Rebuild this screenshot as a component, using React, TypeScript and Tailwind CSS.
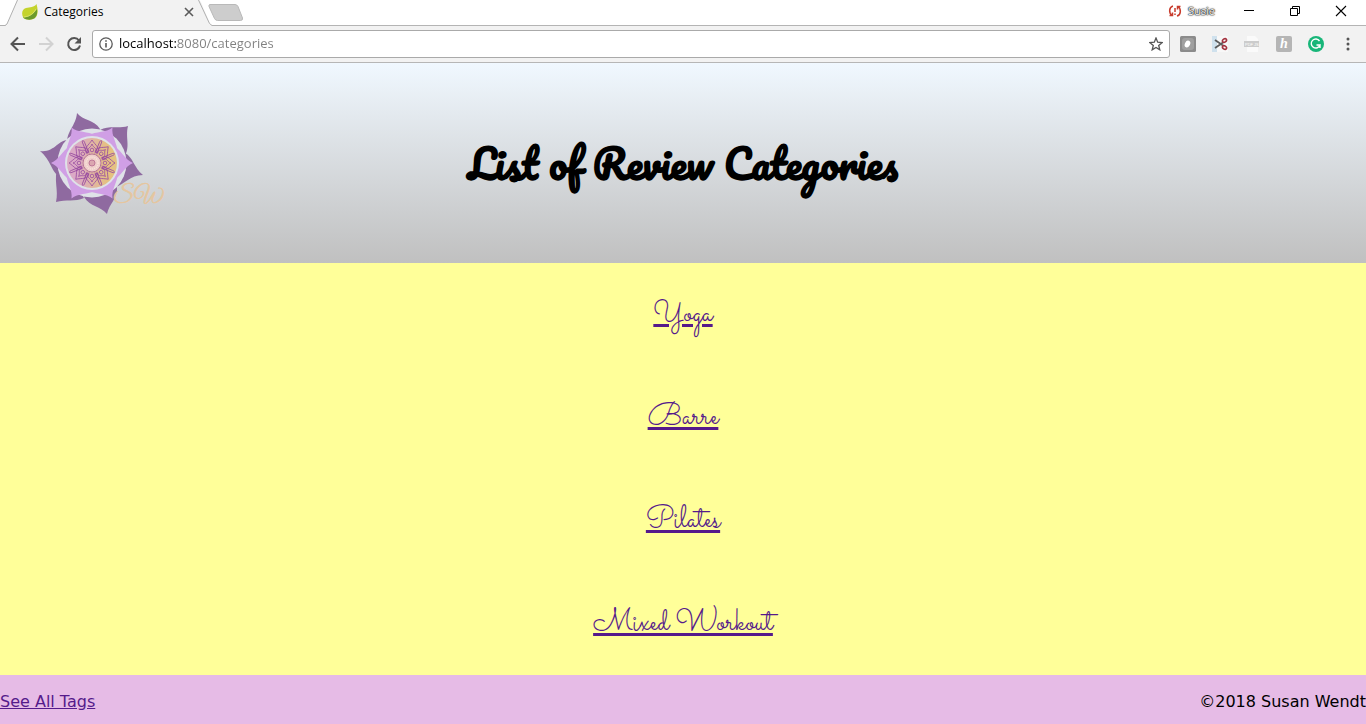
import React from "react";

const categories = ["Yoga", "Barre", "Pilates", "Mixed Workout"];

function TabStrip() {
  return (
    <header className="relative flex h-[26px] border-b border-[#b4b4b4] bg-white">
      <svg className="absolute left-0 top-0 h-[26px] w-[250px]" viewBox="0 0 250 26" aria-hidden="true">
        <path d="M5 26 7 24 17 1 19 0H199L201 2 210 24 213 26Z" fill="#f2f2f2" />
        <path d="M0 25.5H5L7 24 17.5 0M198.500 0 209.500 23.500 212 25.500H250" fill="none" stroke="#b0b0b0" />
        <path d="M210 4.500H235Q237 4.500 238 6.500L242.500 18Q243 20.500 240.500 20.500H217.500Q215.500 20.500 214.500 18.500L209 6.500Q208.500 4.500 210 4.500Z" fill="#cdcdcd" stroke="#b9b9b9" />
      </svg>
      <div className="relative flex h-6 w-[200px] items-center pl-[22px]">
        <svg className="h-4 w-4" viewBox="0 0 16 16" aria-hidden="true">
          <path d="M14.500 0C16 5 16.500 11 13 14 9.500 16.500 4 16 1.500 14 -1 10 0 5 4 4 8 3 12 3.500 14.500 0Z" fill="#c4d32c" />
          <path d="M1 13.500C7 13 11 11 15 5 15.500 9 15 12 12.500 14.300 9 16.500 4 16 1 13.500Z" fill="#6b9a2c" />
          <path d="M2 13C8 12.500 11.500 9.500 14 5" fill="none" stroke="#e2e982" strokeWidth=".7" />
        </svg>
        <h2 className="ml-[6px] text-xs">Categories</h2>
        <button className="ml-auto mr-[5px] h-3 w-3" aria-label="Close tab">
          <svg viewBox="0 0 12 12" aria-hidden="true"><path d="m2 2 8 8m0-8-8 8" stroke="#5a5a5a" strokeWidth="1.6" /></svg>
        </button>
      </div>
      <div className="ml-auto flex h-[22px] items-center">
        <svg className="mr-[6px] h-3 w-[14px]" viewBox="0 0 14 12" fill="none" stroke="#c83c2d" strokeWidth="1.500" aria-hidden="true">
          <path d="M5 1C1 2 .5 8 4 10.500M1.500 10.500H4.500V7.500M9 11C13 10 13.500 4 10 1.500M12.500 1.500H9.500V4.500M7 3V7M7 8.500V10" />
        </svg>
        <span className="mr-[28px] text-[11px] text-white [text-shadow:0_0_2px_#000,0_0_1px_#000,0_0_1px_#000]">Susie</span>
        <button className="mr-[34px] h-3 w-3" aria-label="Minimize"><svg viewBox="0 0 12 12"><path d="M1 5.500H11" stroke="#000" /></svg></button>
        <button className="mr-[34px] h-3 w-3" aria-label="Restore"><svg viewBox="0 0 12 12" fill="none" stroke="#000"><path d="M1.500 3.500H8.500V10.500H1.500ZM3.500 3.500V1.500H10.500V8.500H8.500" /></svg></button>
        <button className="mr-[19px] h-3 w-3" aria-label="Close"><svg viewBox="0 0 12 12"><path d="m1 1 10 10m0-10L1 11" stroke="#000" strokeWidth="1.100" /></svg></button>
      </div>
    </header>
  );
}

function Toolbar() {
  return (
    <nav className="flex h-[37px] items-center border-b border-[#b6b6b6] bg-[#f2f2f2] pl-[10px]" aria-label="Browser">
      <button className="h-4 w-4" aria-label="Back"><svg viewBox="0 0 16 16" fill="none" stroke="#555" strokeWidth="2"><path d="M15 8H2M8 1.500 1.500 8 8 14.500" /></svg></button>
      <button className="ml-3 h-4 w-4" aria-label="Forward" disabled><svg viewBox="0 0 16 16" fill="none" stroke="#d2d2d2" strokeWidth="2"><path d="M1 8H14M8 1.500 14.500 8 8 14.500" /></svg></button>
      <button className="ml-3 h-4 w-4" aria-label="Reload"><svg viewBox="0 0 16 16"><path d="M13 4.500A6 6 0 1 0 14 9.500" fill="none" stroke="#555" strokeWidth="2" /><path d="M15 1V7.500H8.500Z" fill="#555" /></svg></button>
      <div className="ml-[10px] flex h-7 flex-1 items-center rounded-[3px] border border-[#aaa] bg-white px-[6px]">
        <svg className="h-[14px] w-[14px]" viewBox="0 0 14 14" fill="none" stroke="#5a5a5a" aria-hidden="true"><circle cx="7" cy="7" r="6.200" strokeWidth="1.300" /><path d="M7 6V10.500M7 3.200V4.800" strokeWidth="1.600" /></svg>
        <input
          className="ml-[6px] min-w-0 flex-1 bg-linear-to-r from-black from-[58px] to-[#808080] to-[58px] bg-clip-text text-[13px] text-transparent outline-none"
          aria-label="Address"
          defaultValue="localhost:8080/categories"
        />
        <button className="h-[14px] w-[14px]" aria-label="Bookmark"><svg viewBox="0 0 14 14"><path d="m7 1 1.700 4.200 4.500.3-3.500 2.900 1.100 4.400L7 10.400l-3.800 2.400 1.100-4.400L.8 5.500l4.500-.3Z" fill="none" stroke="#555" strokeWidth="1.300" /></svg></button>
      </div>
      <div className="ml-[10px] mr-[10px] flex items-center gap-4">
        <button className="h-4 w-4" aria-label="Camera extension"><svg viewBox="0 0 16 16"><rect width="16" height="16" rx="1.500" fill="#8b8b8b" /><rect x="2" y="2" width="12" height="12" rx="3" fill="#a0a0a0" /><ellipse cx="7.500" cy="8" rx="2.600" ry="3.600" fill="#fff" transform="rotate(25 7.500 8)" /></svg></button>
        <button className="h-4 w-4" aria-label="Clipping extension">
          <svg viewBox="0 0 16 16" fill="none">
            <path d="M0 0H16V16H0Z" fill="#f8f8f8" />
            <path d="M0 0H5V16H0Z" fill="#cfe1ed" />
            <path d="m3 4 8 5.500M3 12l8-5.500" stroke="#5c5c5c" strokeWidth="1.800" />
            <ellipse cx="12.500" cy="4.500" rx="2.200" ry="1.600" stroke="#a3323f" strokeWidth="1.600" transform="rotate(-35 12.500 4.500)" />
            <ellipse cx="12.500" cy="11.500" rx="2.200" ry="1.600" stroke="#a3323f" strokeWidth="1.600" transform="rotate(35 12.500 11.500)" />
          </svg>
        </button>
        <button className="h-4 w-4" aria-label="PDF extension"><svg viewBox="0 0 16 16"><path d="M3 0H11L14 3V16H3Z" fill="#fafafa" /><path d="M0 5H15V11H0Z" fill="#ccc" /><text x="1" y="9.500" fontSize="4" fontFamily="Liberation Sans" fill="#fff">PDF JS</text></svg></button>
        <button className="flex h-4 w-4 items-center justify-center rounded-[2px] bg-[#b5b5b5] font-['Liberation_Serif',serif] text-sm font-bold italic leading-none text-white" aria-label="Honey extension">h</button>
        <button className="h-4 w-4" aria-label="Grammar extension"><svg viewBox="0 0 16 16"><circle cx="8" cy="8" r="8" fill="#18b679" /><path d="M11.500 5A4.500 4.500 0 1 0 12 9H8.500M12 8.500V12" fill="none" stroke="#fff" strokeWidth="1.400" /></svg></button>
        <button className="h-4 w-4" aria-label="Menu"><svg viewBox="0 0 16 16" fill="#555"><circle cx="8" cy="3" r="1.500" /><circle cx="8" cy="8" r="1.500" /><circle cx="8" cy="13" r="1.500" /></svg></button>
      </div>
    </nav>
  );
}

const petals = [0, 60, 120, 180, 240, 300];
const rosette = [0, 45, 90, 135, 180, 225, 270, 315];

function Logo() {
  return (
    <svg className="h-[110px] w-[126px] overflow-visible" viewBox="38 108 126 110" role="img" aria-label="SW lotus mandala">
      <defs>
        <linearGradient id="disc"><stop offset=".2" stopColor="#dba9c5" /><stop offset=".8" stopColor="#e5c181" /></linearGradient>
      </defs>
      <g fill="#8f6aa0">
        <path d="M77 113C83 121 94 119 100 129L91 146 67 145C66 131 76 126 77 113Z" />
        <path d="M128 126C125 138 131 147 124 157L111 151 100 130C109 125 119 129 128 126Z" />
        <path d="M125 153C133 157 134 168 143 175C130 175 124 185 115 187L108 176Z" />
        <path d="M107 214C101 206 90 207 84 197L96 181 117 187C118 198 109 204 107 214Z" />
        <path d="M56 202C59 190 53 180 58 166L73 178 84 198C75 202 66 199 56 202Z" />
        <path d="M40 151C54 153 58 140 68 140L73 158 59 176C52 173 51 160 40 151Z" />
      </g>
      <circle cx="92" cy="163" r="34.500" fill="#dfe2e8" />
      {petals.map((a) => (
        <path key={a} d="M51 163C59 160 62 151 70 146L76 163 70 180C62 175 59 166 51 163Z" fill="#d09fe5" transform={`rotate(${a} 92 163)`} />
      ))}
      <circle cx="92" cy="163" r="27" fill="#dfe2e8" />
      <circle cx="92" cy="163" r="25" fill="url(#disc)" />
      <g fill="none" stroke="#974aa0" strokeWidth=".8">
        {rosette.map((a) => (
          <g key={a} transform={`rotate(${a} 92 163)`}>
            <path d="M88 153C82 149 89 145 92 140C95 145 102 149 96 153M89 152C86 148 91 148 92 144C93 148 98 148 95 152" />
            <circle cx="92" cy="150" r="1.800" />
            <path d="M91 153V141C91 138 93 138 93 141V153" transform="rotate(22.500 92 163)" />
          </g>
        ))}
      </g>
      <circle cx="92" cy="163" r="9" fill="#efcfcb" stroke="#b67696" />
      <circle cx="92" cy="163" r="6" fill="none" stroke="#fae5dc" strokeWidth="1.500" strokeDasharray="1 1" />
      <circle cx="92" cy="163" r="3" fill="#dba7b0" stroke="#bf7998" />
      <text x="113" y="201" fill="#e5c69f" stroke="#e5c69f" strokeWidth=".6" fontFamily="'Great Vibes', cursive" fontSize="21">SW</text>
    </svg>
  );
}

export default function App() {
  return (
    <div className="flex min-h-screen flex-col bg-[#ffff99] font-['Open_Sans',sans-serif] text-black">
      <TabStrip />
      <Toolbar />
      <header className="grid h-[200px] grid-cols-[1fr_auto_1fr] items-center bg-linear-to-b from-[#f0f8ff] to-[#c0c0c0]">
        <div className="pl-[38px]"><Logo /></div>
        <h1 className="font-['Pacifico',cursive] text-[40px] font-bold leading-[60px]">List of Review Categories</h1>
      </header>
      <main className="flex flex-1 flex-col items-center justify-around text-[#551a8b]">
        {categories.map((name) => (
          <a key={name} href="#" className="font-['Sacramento',cursive] text-[30px] leading-10 underline decoration-[3px] underline-offset-[3px]">{name}</a>
        ))}
      </main>
      <footer className="flex h-[49px] items-center justify-between bg-[#e6bbe6] pt-1 font-['Verdana','DejaVu_Sans',sans-serif] text-base">
        <a href="#" className="text-[#551a8b] underline">See All Tags</a>
        <p>©2018 Susan Wendt</p>
      </footer>
    </div>
  );
}
